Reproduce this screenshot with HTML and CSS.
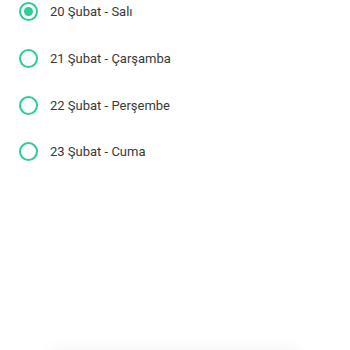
FILE: index.html
```html
<!DOCTYPE html>
<html lang="tr">
<head>
<meta charset="utf-8">
<link rel="stylesheet" href="styles.css">
</head>
<body>
<div class="page">
  <ul class="options">
    <li class="option selected"><span class="radio"></span><span class="label">20 Şubat - Salı</span></li>
    <li class="option"><span class="radio"></span><span class="label">21 Şubat - Çarşamba</span></li>
    <li class="option"><span class="radio"></span><span class="label">22 Şubat - Perşembe</span></li>
    <li class="option"><span class="radio"></span><span class="label">23 Şubat - Cuma</span></li>
  </ul>
  <div class="footer"><div class="btn"></div></div>
</div>
</body>
</html>
```
FILE: styles.css
```css
html, body {
  margin: 0;
  padding: 0;
  background: #fff;
}
.page {
  width: 350px;
  height: 350px;
  position: relative;
  overflow: hidden;
  font-family: Roboto, "Noto Sans", sans-serif;
}
.options {
  list-style: none;
  margin: 0;
  padding: 0 0 0 19px;
  display: flex;
  flex-direction: column;
}
.option {
  display: flex;
  align-items: center;
  height: 46.7px;
  margin-top: -12px;
  margin-bottom: 12px;
}
.option:first-child { margin-top: -11.5px; }
.radio {
  width: 15px;
  height: 15px;
  border: 2.2px solid #2fcb98;
  border-radius: 50%;
  box-sizing: content-box;
  position: relative;
  flex: none;
}
.selected .radio::after {
  content: "";
  position: absolute;
  left: 3px;
  top: 3px;
  width: 9px;
  height: 9px;
  border-radius: 50%;
  background: #2fcb98;
}
.label {
  margin-left: 12px;
  font-size: 13px;
  color: #383838;
}
.footer {
  position: absolute;
  left: 0;
  right: 0;
  top: 352px;
  display: flex;
  justify-content: center;
}
.btn {
  width: 250px;
  height: 40px;
  background: #fff;
  box-shadow: 0 -2px 16px rgba(0,0,0,0.05);
}
```
